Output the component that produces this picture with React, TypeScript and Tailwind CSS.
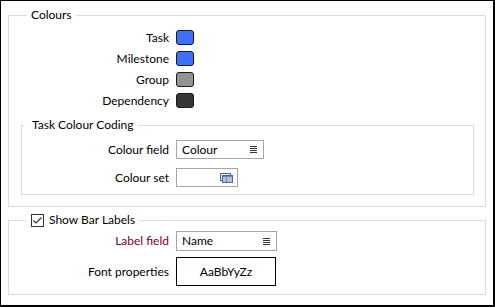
import React from "react";

const font = { fontFamily: 'Lato, "Noto Sans", sans-serif' };

function Swatch({ color }: { color: string }) {
  return (
    <div
      className="w-[18px] h-[15px] rounded-[3px] border border-[#1a1a1a]"
      style={{ backgroundColor: color }}
    />
  );
}

function MenuIcon() {
  return (
    <svg width="7" height="7" viewBox="0 0 7 7" className="block">
      <rect x="0" y="0" width="7" height="1" fill="#333" />
      <rect x="0" y="2" width="7" height="1" fill="#333" />
      <rect x="0" y="4" width="7" height="1" fill="#333" />
      <rect x="0" y="6" width="7" height="1" fill="#333" />
    </svg>
  );
}

function TableIcon() {
  return (
    <svg width="13" height="10" viewBox="0 0 13 10" className="block">
      <rect x="0.5" y="0.5" width="10" height="7" fill="#dfe7f2" stroke="#4d6a93" />
      <rect x="2.5" y="2.5" width="10" height="7" fill="#f3f6fb" stroke="#4d6a93" />
      <rect x="3" y="3" width="9" height="1.5" fill="#6f8ab0" />
      <line x1="3" y1="6" x2="12" y2="6" stroke="#6f8ab0" strokeWidth="1" />
      <line x1="3" y1="8" x2="12" y2="8" stroke="#6f8ab0" strokeWidth="1" />
      <line x1="6.5" y1="4" x2="6.5" y2="9" stroke="#6f8ab0" strokeWidth="1" />
    </svg>
  );
}

export default function App() {
  return (
    <div
      className="w-[495px] h-[307px] bg-white border-l border-t border-r-2 border-b-2 border-black text-[12px] leading-[16px] text-black overflow-hidden"
      style={font}
    >
      <fieldset className="mt-[6px] ml-[7px] w-[478px] border border-[#dcdcdc] pl-[12px] pr-[11px] pt-[7px] pb-[11px]">
        <legend className="ml-[6px] px-[4px]">Colours</legend>
        <div className="flex flex-col gap-[6px]">
          {[
            ["Task", "#3f6fff"],
            ["Milestone", "#3f6fff"],
            ["Group", "#939393"],
            ["Dependency", "#373737"],
          ].map(([label, color]) => (
            <div key={label} className="flex items-center h-[15px]">
              <div className="w-[148px] text-right leading-[15px]">{label}</div>
              <div className="ml-[7px]">
                <Swatch color={color} />
              </div>
            </div>
          ))}
        </div>
        <fieldset className="mt-[9px] border border-[#dcdcdc] pt-[7px] pb-[7px]">
          <legend className="ml-[2px] pl-[8px] pr-[4px]">Task Colour Coding</legend>
          <div className="flex flex-col gap-[9px]">
            <div className="flex items-center">
              <div className="w-[147px] text-right">Colour field</div>
              <div className="ml-[7px] w-[88px] h-[19px] border border-[#a5a5a5] flex items-center justify-between pl-[5px] pr-[6px]">
                <span>Colour</span>
                <MenuIcon />
              </div>
            </div>
            <div className="flex items-center">
              <div className="w-[147px] text-right">Colour set</div>
              <div className="ml-[7px] w-[62px] h-[19px] border border-[#a5a5a5] flex items-center justify-end pr-[4px]">
                <TableIcon />
              </div>
            </div>
          </div>
        </fieldset>
      </fieldset>

      <fieldset className="mt-[5px] ml-[7px] w-[478px] border border-[#dcdcdc] pl-[12px] pt-[3px] pb-[8px]">
        <legend className="ml-[6px] px-[4px] flex items-center">
          <span className="w-[13px] h-[13px] border border-[#333] bg-white flex items-center justify-center">
            <svg width="11" height="11" viewBox="0 0 11 11">
              <path d="M1.5 5.5 L4 8 L9.5 2.5" fill="none" stroke="#333" strokeWidth="1.2" />
            </svg>
          </span>
          <span className="ml-[5px]">Show Bar Labels</span>
        </legend>
        <div className="flex flex-col gap-[6px]">
          <div className="flex items-center">
            <div className="w-[148px] text-right text-[#800020]">Label field</div>
            <div className="ml-[7px] w-[101px] h-[20px] border border-[#a5a5a5] flex items-center justify-between pl-[5px] pr-[6px]">
              <span>Name</span>
              <MenuIcon />
            </div>
          </div>
          <div className="flex items-center">
            <div className="w-[148px] text-right">Font properties</div>
            <div className="ml-[7px] w-[100px] h-[29px] border border-black flex items-center justify-center">
              AaBbYyZz
            </div>
          </div>
        </div>
      </fieldset>
    </div>
  );
}
